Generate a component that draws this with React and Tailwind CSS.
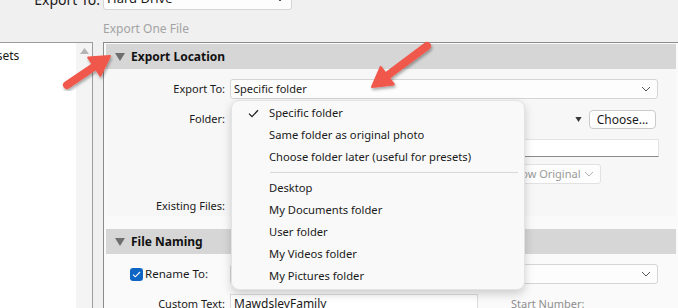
import React from "react";

const menuItems = [
  ["Specific folder", true],
  ["Same folder as original photo"],
  ["Choose folder later (useful for presets)"],
  null,
  ["Desktop"],
  ["My Documents folder"],
  ["User folder"],
  ["My Videos folder"],
  ["My Pictures folder"],
];

function Chevron({ className = "" }) {
  return (
    <svg width="10" height="6" viewBox="0 0 10 6" className={className}>
      <path d="M1 1l4 4 4-4" fill="none" stroke="currentColor" strokeWidth="1" />
    </svg>
  );
}

function Caret({ className = "" }) {
  return (
    <svg width="10" height="8" viewBox="0 0 10 8" className={className}>
      <path d="M0 0h10L5 8z" fill="currentColor" />
    </svg>
  );
}

function SelectBox({ text, className = "", muted }) {
  return (
    <div
      className={
        "flex h-[20px] items-center rounded-[3px] border border-[#d5d5d5] bg-[#fdfdfd] pl-[3px] pr-[6px] " +
        className
      }
    >
      <span className={"flex-1 truncate " + (muted ? "text-[#9a9a9a]" : "text-[#1a1a1a]")}>
        {text}
      </span>
      <Chevron className={muted ? "text-[#b5b5b5]" : "text-[#555]"} />
    </div>
  );
}

function SectionHeader({ title }) {
  return (
    <div className="flex h-[25px] items-center bg-[#d6d6d6]">
      <Caret className="ml-[9px] text-[#6e6e6e]" />
      <span className="ml-[6px] text-[12px] font-bold text-[#111]">{title}</span>
    </div>
  );
}

function Label({ children }) {
  return <div className="w-[119px] shrink-0 text-right text-[11px] text-[#1a1a1a]">{children}</div>;
}

// red callout arrow, tail -> tip
function Arrow({ x1, y1, x2, y2 }) {
  const dx = x2 - x1;
  const dy = y2 - y1;
  const len = Math.hypot(dx, dy);
  const ux = dx / len;
  const uy = dy / len;
  const px = -uy;
  const py = ux;
  const hl = 19;
  const hw = 11;
  const bx = x2 - ux * hl;
  const by = y2 - uy * hl;
  const pts = [
    [x2, y2],
    [bx + px * hw, by + py * hw],
    [bx - px * hw, by - py * hw],
  ]
    .map((p) => p.join(","))
    .join(" ");
  return (
    <g filter="url(#shadow)">
      <line x1={x1} y1={y1} x2={bx + ux * 2} y2={by + uy * 2} stroke="#f0584b" strokeWidth="8" strokeLinecap="round" />
      <polygon points={pts} fill="#f0584b" stroke="#f0584b" strokeWidth="2" strokeLinejoin="round" />
    </g>
  );
}

export default function App() {
  return (
    <div className="relative h-[308px] w-[678px] overflow-hidden bg-[#f0f0f0] font-['Noto_Sans',sans-serif] text-[11px]">
      {/* top: export to */}
      <div className="-mt-[12px] flex h-[22px] items-center">
        <div className="w-[100px] text-right text-[14px] text-[#1a1a1a]">Export To:</div>
        <SelectBox text="Hard Drive" className="ml-[3px] h-[22px] w-[189px] text-[13px]" />
      </div>
      <div className="mt-[12px] pl-[103px] text-[12px] leading-[14px] text-[#a3a3a3]">Export One File</div>

      <div className="mt-[6px] flex h-[266px]">
        {/* presets list */}
        <div className="flex w-[93px] shrink-0 overflow-hidden border-r border-t border-[#9c9c9c] bg-white">
          <div className="-ml-[22px] flex-1 pt-[4px] text-[12px] leading-[18px] text-[#1a1a1a]">Presets</div>
          <div className="flex w-[16px] justify-center bg-[#f4f4f4] pt-[5px]">
            <svg width="9" height="6" viewBox="0 0 9 6">
              <path d="M0 6h9L4.5 0z" fill="#b4b4b4" />
            </svg>
          </div>
        </div>

        {/* export settings */}
        <div className="ml-[10px] flex-1 border-l border-t border-[#8c8c8c] bg-[#fafafa] px-[2px] pt-[1px]">
          <SectionHeader title="Export Location" />
          <div className="bg-[#f7f7f7]">
            <div className="flex items-center pt-[10px]">
              <Label>Export To:</Label>
              <SelectBox text="Specific folder" className="ml-[5px] mr-[18px] flex-1" />
            </div>
            <div className="mt-[11px] flex h-[19px] items-center">
              <Label>Folder:</Label>
              <div className="flex-1" />
              <Caret className="h-[5px] w-[7px] text-[#3a3a3a]" />
              <div className="ml-[7px] mr-[20px] flex h-[19px] w-[67px] items-center justify-center rounded-[4px] border border-[#cacaca] bg-white text-[12px] text-[#1a1a1a]">
                Choose...
              </div>
            </div>
            <div className="mt-[10px] flex">
              <div className="ml-[194px] mr-[17px] h-[18px] flex-1 border border-[#e2e2e2] border-b-[#8a8a8a] bg-white" />
            </div>
            <div className="mt-[7px] flex">
              <SelectBox text="Below Original" muted className="ml-[395px] w-[100px] border-[#e2e2e2] bg-[#f5f5f5]" />
            </div>
            <div className="mt-[12px] flex h-[20px] items-center">
              <Label>Existing Files:</Label>
            </div>
          </div>

          <div className="mt-[13px]">
            <SectionHeader title="File Naming" />
          </div>
          <div className="flex items-center pt-[10px]">
            <div className="flex w-[119px] shrink-0 items-center pl-[24px]">
              <div className="flex h-[13px] w-[13px] items-center justify-center rounded-[3px] bg-[#0f65c4]">
                <svg width="9" height="7" viewBox="0 0 9 7">
                  <path d="M1 3.6l2.3 2.2L8 1" fill="none" stroke="white" strokeWidth="1.1" />
                </svg>
              </div>
              <span className="ml-[2px] text-[11.5px] text-[#1a1a1a]">Rename To:</span>
            </div>
            <SelectBox text="" className="ml-[5px] mr-[18px] flex-1" />
          </div>
          <div className="mt-[10px] flex h-[20px] items-center">
            <Label>Custom Text:</Label>
            <div className="ml-[5px] flex h-[20px] w-[248px] items-center border border-[#dcdcdc] bg-white pl-[3px] text-[12px] text-[#1a1a1a]">
              MawdsleyFamily
            </div>
            <span className="ml-[33px] text-[#8f8f8f]">Start Number:</span>
          </div>
        </div>
      </div>

      {/* open dropdown menu */}
      <div className="absolute left-[231px] top-[100px] w-[294px] rounded-[8px] border border-[#e3e3e3] bg-[#f9f9f9] pb-[2px] pt-[1px] shadow-[0_4px_10px_rgba(0,0,0,0.18)]">
        {menuItems.map((it, i) =>
          it === null ? (
            <div key={i} className="flex h-[9px] items-center pl-[38px] pr-[6px]">
              <div className="h-px flex-1 bg-[#d8d8d8]" />
            </div>
          ) : (
            <div key={i} className="flex h-[22px] items-center text-[11.2px] text-[#1a1a1a]">
              <div className="flex w-[37px] justify-center pl-[5px]">
                {it[1] && (
                  <svg width="11" height="9" viewBox="0 0 11 9">
                    <path d="M1 4.6l3 3L10 1.2" fill="none" stroke="#222" strokeWidth="1.3" />
                  </svg>
                )}
              </div>
              <span>{it[0]}</span>
            </div>
          )
        )}
      </div>

      {/* callout arrows */}
      <svg className="pointer-events-none absolute left-0 top-0" width="678" height="308">
        <defs>
          <filter id="shadow" x="-20%" y="-20%" width="140%" height="140%">
            <feDropShadow dx="1" dy="2" stdDeviation="1.5" floodColor="#000" floodOpacity="0.35" />
          </filter>
        </defs>
        <Arrow x1={67} y1={85} x2={110} y2={56} />
        <Arrow x1={427} y1={46} x2={372} y2={87} />
      </svg>
    </div>
  );
}
